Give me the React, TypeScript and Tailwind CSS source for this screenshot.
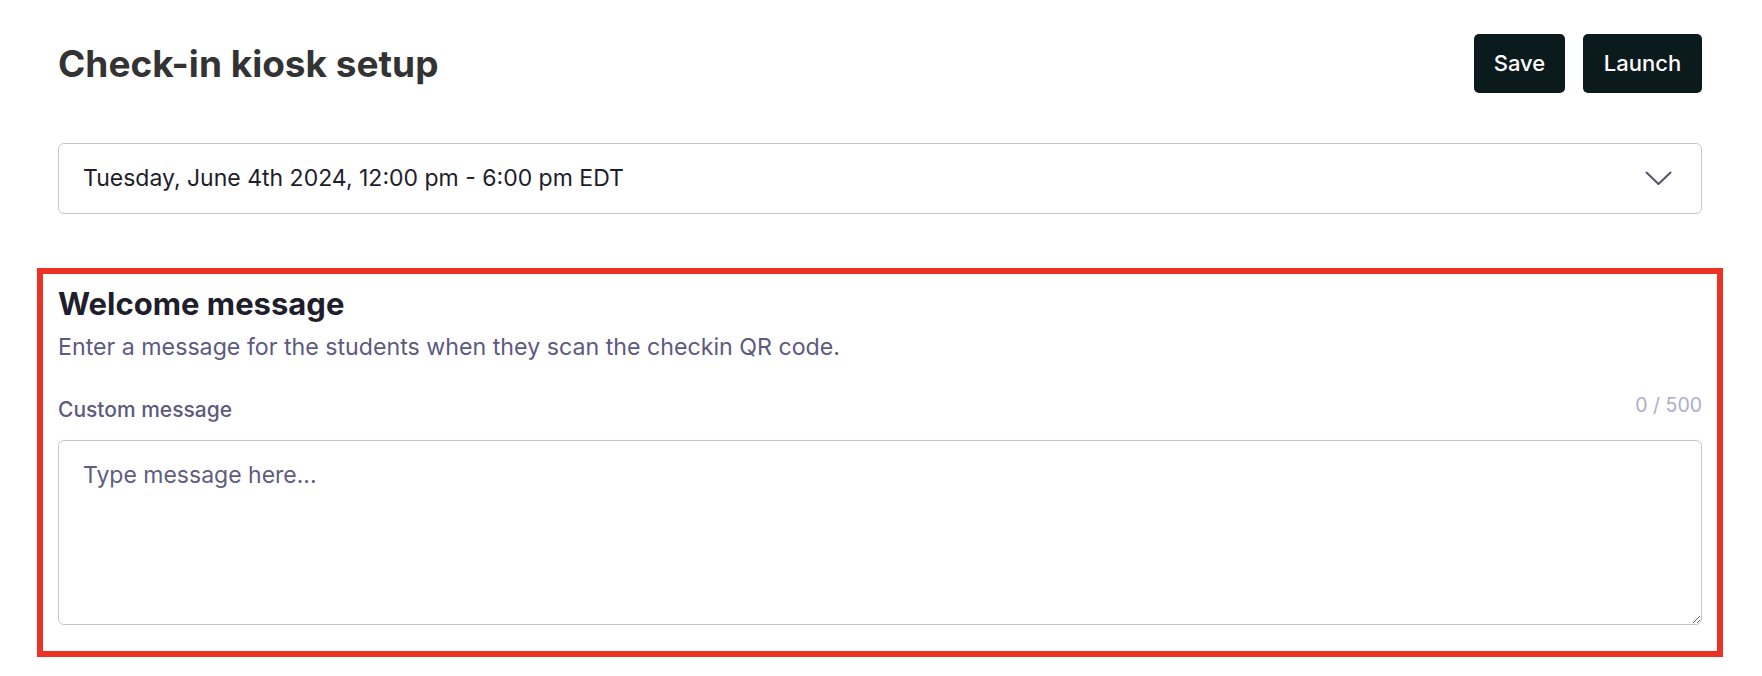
import React from 'react';

// Kiosk setup page: header, session picker and the welcome message form
const font = { fontFamily: 'Inter, "Liberation Sans", sans-serif' };

function Chevron() {
  return (
    <svg width="27" height="15" viewBox="0 0 27 15" fill="none">
      <path d="M1.5 1.5 L13.5 13 L25.5 1.5" stroke="#55536e" strokeWidth="2" strokeLinecap="round" strokeLinejoin="round" />
    </svg>
  );
}

export default function App() {
  return (
    <div className="min-h-[676px] bg-white pl-[58px] pr-[60px] pt-[34px]" style={font}>
      {/* header */}
      <div className="flex items-center justify-between h-[59px]">
        <h1 className="text-[37px] font-bold text-[#333333]">Check-in kiosk setup</h1>
        <div className="flex gap-[18px]">
          <button className="h-[59px] w-[91px] rounded-[5px] bg-[#0b1a1c] text-[22px] font-medium text-white">Save</button>
          <button className="h-[59px] w-[119px] rounded-[5px] bg-[#0b1a1c] text-[22px] font-medium text-white">Launch</button>
        </div>
      </div>

      {/* session picker */}
      <div className="mt-[50px] flex h-[71px] items-center justify-between rounded-[6px] border border-[#c5c3d9] pl-[24px] pr-[29px]">
        <span className="text-[23px] text-[#1d1d2b]">Tuesday, June 4th 2024, 12:00 pm - 6:00 pm EDT</span>
        <Chevron />
      </div>

      {/* welcome message */}
      <section className="-mx-[21px] mt-[54px] border-[6px] border-[#ec3323] px-[15px] pt-[14px] pb-[26px]">
        <h2 className="text-[31px] font-bold leading-[32px] text-[#1e1e2c]">Welcome message</h2>
        <p className="mt-[13px] text-[23.2px] leading-[28px] text-[#5c5a7e]">
          Enter a message for the students when they scan the checkin QR code.
        </p>
        <div className="mt-[37px] flex items-center justify-between h-[24px]">
          <label className="text-[21px] font-medium text-[#5d5b7d]">Custom message</label>
          <span className="-mt-[8px] text-[19.5px] text-[#aeadc9]">0 / 500</span>
        </div>
        <textarea
          placeholder="Type message here..."
          className="mt-[18px] block h-[185px] w-full rounded-[6px] border border-[#c5c3d9] px-[24px] py-[17px] text-[23px] text-[#1d1d2b] placeholder:text-[#5f5d80] outline-none"
        />
      </section>
    </div>
  );
}
